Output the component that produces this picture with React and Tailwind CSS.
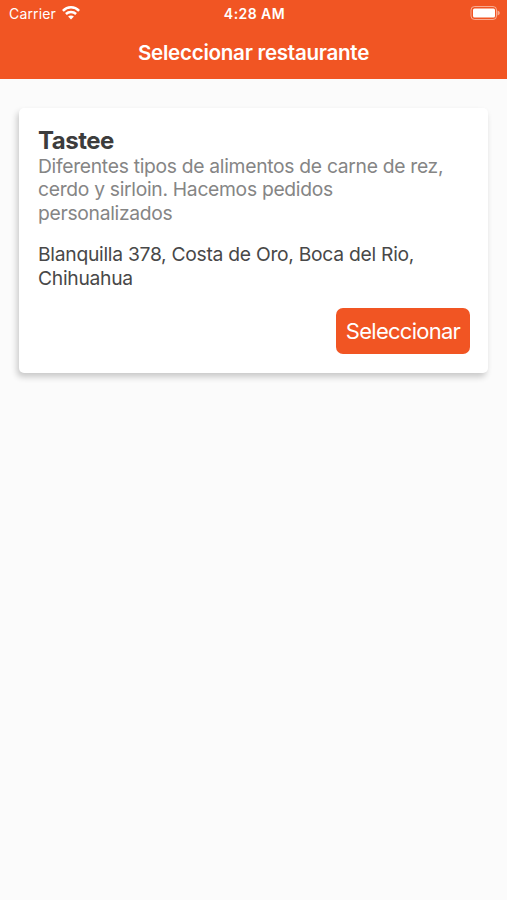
export default function App() {
  return (
    <div className="flex h-screen w-full flex-col overflow-hidden bg-[#fbfbfb] font-['Inter',sans-serif]">
      <header className="h-[79px] shrink-0 bg-[#f15523] text-white">
        <div className="grid h-[27px] grid-cols-3 items-center pl-[9px] pr-[7px] text-[14px]">
          <div className="flex items-center gap-[6px] tracking-[0.15px]">
            <span>Carrier</span>
            <svg className="mb-[2px]" width="18" height="14" viewBox="0 0 18 14" fill="none" stroke="white" strokeWidth="2.5">
              <path d="M.9 4.800C5.400.2 12.600.2 17.100 4.800M3.900 8c2.900-2.700 7.300-2.700 10.200 0" />
              <path d="M9 13.500 6.100 10.600c1.600-1.500 4.200-1.500 5.800 0Z" fill="white" stroke="none" />
            </svg>
          </div>
          <span className="text-center text-[14px] font-semibold tracking-[0.45px]">4:28 AM</span>
          <svg className="mb-px justify-self-end" width="30" height="14" viewBox="0 0 30 14">
            <rect x="1" y=".5" width="25.500" height="13" rx="3.500" fill="none" stroke="white" strokeOpacity=".5" />
            <rect x="3" y="2.500" width="22" height="9" rx="1.500" fill="white" />
            <path d="M27.500 4.500c3 1 3 4 0 5Z" fill="white" fillOpacity=".5" />
          </svg>
        </div>
        <h1 className="text-center text-[20.6px] font-semibold leading-[51px] tracking-[-0.28px]">Seleccionar restaurante</h1>
      </header>
      <main className="px-[19px] pt-[29px]">
        <article className="h-[265px] rounded-[5px] bg-white pl-[19px] pr-[18px] pt-[19px] shadow-[-2px_4px_6px_rgba(0,0,0,0.2)]">
          <h2 className="text-[24px] font-bold leading-[28px] tracking-[-0.5px] text-[#3c3c3c]">Tastee</h2>
          <p className="whitespace-nowrap text-[19.3px] leading-[23.4px] tracking-[-0.3px] text-[#858585]">
            Diferentes tipos de alimentos de carne de rez,<br />cerdo y sirloin. Hacemos pedidos<br />personalizados
          </p>
          <p className="mt-[18px] whitespace-nowrap text-[19.3px] leading-[23.4px] tracking-[-0.28px] text-[#484848]">
            Blanquilla 378, Costa de Oro, Boca del Rio,<br />Chihuahua
          </p>
          <div className="mt-[18px] flex justify-end">
            <button className="h-[46px] w-[134px] rounded-[7px] bg-[#f15523] text-[22px] tracking-[-0.73px] text-white">Seleccionar</button>
          </div>
        </article>
      </main>
    </div>
  );
}
